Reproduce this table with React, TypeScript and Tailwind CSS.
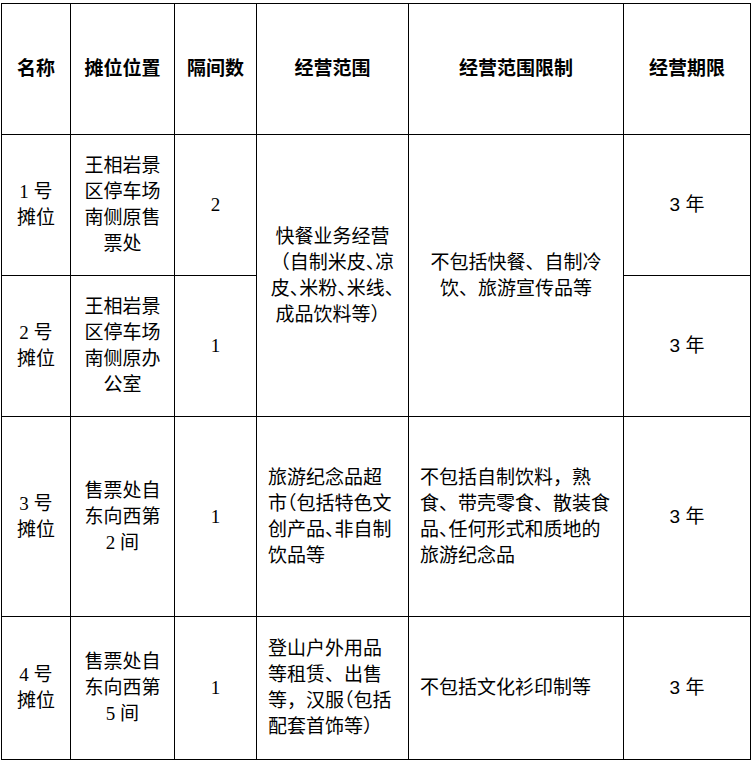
import React from 'react';

const serif = '[font-family:"Liberation_Serif","Noto_Sans_CJK_SC",serif]';

type Cell = {
  lines: React.ReactNode[];
  align?: 'center' | 'left';
  sans?: boolean;
};

function Tight({ c }: { c: string }) {
  return <span className="tracking-[-0.5em]">{c}</span>;
}

function Lines({ lines, align = 'center', sans }: Cell) {
  return (
    <div
      className={`flex flex-col ${align === 'left' ? 'items-start pl-[11px]' : 'items-center'} ${
        sans ? '[font-family:"Liberation_Sans","Noto_Sans_CJK_SC",sans-serif]' : ''
      }`}
    >
      {lines.map((line, i) => (
        <div key={i} className="whitespace-nowrap">
          {line}
        </div>
      ))}
    </div>
  );
}

const headers = ['名称', '摊位位置', '隔间数', '经营范围', '经营范围限制', '经营期限'];

export default function App() {
  const cell = 'flex items-center justify-center border-r border-b border-black';

  return (
    <div className="bg-white min-h-[764px] pt-[3px] pl-px">
      <div
        className={`grid w-[750px] grid-cols-[69px_104px_82px_152px_215px_127px] grid-rows-[131px_141px_141px_200px_143px] border-l border-t border-black text-[19px] leading-[26px] text-black ${serif}`}
      >
        {headers.map((h) => (
          <div key={h} className={`${cell} font-bold`}>
            {h}
          </div>
        ))}

        {/* 1号 */}
        <div className={cell}>
          <Lines lines={['1 号', '摊位']} />
        </div>
        <div className={cell}>
          <Lines lines={['王相岩景', '区停车场', '南侧原售', '票处']} />
        </div>
        <div className={cell}>
          <Lines lines={['2']} />
        </div>
        <div className={`${cell} row-span-2`}>
          <Lines
            lines={[
              '快餐业务经营',
              <>（自制米皮<Tight c="、" />凉</>,
              <>皮<Tight c="、" />米粉<Tight c="、" />米线<Tight c="、" /></>,
              '成品饮料等）',
            ]}
          />
        </div>
        <div className={`${cell} row-span-2`}>
          <Lines lines={['不包括快餐、自制冷', '饮、旅游宣传品等']} />
        </div>
        <div className={cell}>
          <Lines lines={['3 年']} sans />
        </div>

        {/* 2号 */}
        <div className={cell}>
          <Lines lines={['2 号', '摊位']} />
        </div>
        <div className={cell}>
          <Lines lines={['王相岩景', '区停车场', '南侧原办', '公室']} />
        </div>
        <div className={cell}>
          <Lines lines={['1']} />
        </div>
        <div className={cell}>
          <Lines lines={['3 年']} sans />
        </div>

        {/* 3号 */}
        <div className={cell}>
          <Lines lines={['3 号', '摊位']} />
        </div>
        <div className={cell}>
          <Lines lines={['售票处自', '东向西第', '2 间']} />
        </div>
        <div className={cell}>
          <Lines lines={['1']} />
        </div>
        <div className={`${cell} !justify-start`}>
          <Lines
            align="left"
            lines={[
              '旅游纪念品超',
              <><Tight c="市" />（包括特色文</>,
              <>创产品<Tight c="、" />非自制</>,
              '饮品等',
            ]}
          />
        </div>
        <div className={`${cell} !justify-start`}>
          <Lines
            align="left"
            lines={[
              '不包括自制饮料，熟',
              '食、带壳零食、散装食',
              <>品<Tight c="、" />任何形式和质地的</>,
              '旅游纪念品',
            ]}
          />
        </div>
        <div className={cell}>
          <Lines lines={['3 年']} sans />
        </div>

        {/* 4号 */}
        <div className={cell}>
          <Lines lines={['4 号', '摊位']} />
        </div>
        <div className={cell}>
          <Lines lines={['售票处自', '东向西第', '5 间']} />
        </div>
        <div className={cell}>
          <Lines lines={['1']} />
        </div>
        <div className={`${cell} !justify-start`}>
          <Lines
            align="left"
            lines={[
              '登山户外用品',
              '等租赁、出售',
              <>等，汉<Tight c="服" />（包括</>,
              '配套首饰等）',
            ]}
          />
        </div>
        <div className={`${cell} !justify-start`}>
          <Lines align="left" lines={['不包括文化衫印制等']} />
        </div>
        <div className={cell}>
          <Lines lines={['3 年']} sans />
        </div>
      </div>
    </div>
  );
}
